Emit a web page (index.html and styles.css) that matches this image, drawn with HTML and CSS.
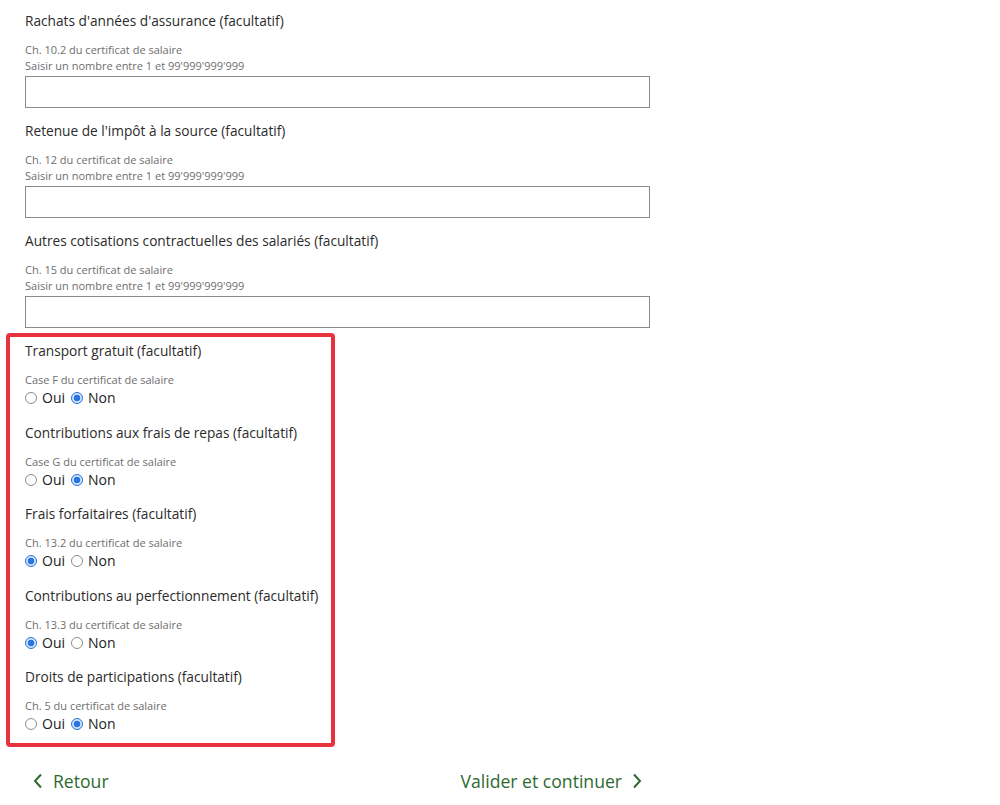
FILE: index.html
```html
<!DOCTYPE html>
<html lang="fr">
<head>
<meta charset="utf-8">
<title>Certificat de salaire</title>
<link rel="stylesheet" href="styles.css">
</head>
<body>
<main class="form">
  <div class="field">
    <div class="label">Rachats d'années d'assurance (facultatif)</div>
    <div class="hint">Ch. 10.2 du certificat de salaire</div>
    <div class="hint">Saisir un nombre entre 1 et 99'999'999'999</div>
    <input class="text-input" type="text">
  </div>
  <div class="field">
    <div class="label">Retenue de l'impôt à la source (facultatif)</div>
    <div class="hint">Ch. 12 du certificat de salaire</div>
    <div class="hint">Saisir un nombre entre 1 et 99'999'999'999</div>
    <input class="text-input" type="text">
  </div>
  <div class="field">
    <div class="label">Autres cotisations contractuelles des salariés (facultatif)</div>
    <div class="hint">Ch. 15 du certificat de salaire</div>
    <div class="hint">Saisir un nombre entre 1 et 99'999'999'999</div>
    <input class="text-input" type="text">
  </div>

  <section class="highlight">
    <div class="radio-field">
      <div class="label">Transport gratuit (facultatif)</div>
      <div class="hint">Case F du certificat de salaire</div>
      <div class="options">
        <label class="opt"><span class="radio"></span>Oui</label>
        <label class="opt"><span class="radio checked"></span>Non</label>
      </div>
    </div>
    <div class="radio-field">
      <div class="label">Contributions aux frais de repas (facultatif)</div>
      <div class="hint">Case G du certificat de salaire</div>
      <div class="options">
        <label class="opt"><span class="radio"></span>Oui</label>
        <label class="opt"><span class="radio checked"></span>Non</label>
      </div>
    </div>
    <div class="radio-field">
      <div class="label">Frais forfaitaires (facultatif)</div>
      <div class="hint">Ch. 13.2 du certificat de salaire</div>
      <div class="options">
        <label class="opt"><span class="radio checked"></span>Oui</label>
        <label class="opt"><span class="radio"></span>Non</label>
      </div>
    </div>
    <div class="radio-field">
      <div class="label">Contributions au perfectionnement (facultatif)</div>
      <div class="hint">Ch. 13.3 du certificat de salaire</div>
      <div class="options">
        <label class="opt"><span class="radio checked"></span>Oui</label>
        <label class="opt"><span class="radio"></span>Non</label>
      </div>
    </div>
    <div class="radio-field last">
      <div class="label">Droits de participations (facultatif)</div>
      <div class="hint">Ch. 5 du certificat de salaire</div>
      <div class="options">
        <label class="opt"><span class="radio"></span>Oui</label>
        <label class="opt"><span class="radio checked"></span>Non</label>
      </div>
    </div>
  </section>

  <nav class="nav">
    <a class="nav-link back" href="#">
      <svg class="chev" width="10" height="16" viewBox="0 0 10 16"><path d="M8 1.5 L2 8 L8 14.5" fill="none" stroke="currentColor" stroke-width="2"/></svg>
      Retour
    </a>
    <a class="nav-link next" href="#">
      Valider et continuer
      <svg class="chev" width="10" height="16" viewBox="0 0 10 16"><path d="M2 1.5 L8 8 L2 14.5" fill="none" stroke="currentColor" stroke-width="2"/></svg>
    </a>
  </nav>
</main>
</body>
</html>
```
FILE: styles.css
```css
* { box-sizing: border-box; }
html, body { margin: 0; padding: 0; background: #fff; }
body {
  font-family: "Open Sans", "Noto Sans", "Liberation Sans", sans-serif;
  color: #333;
}
.form {
  width: 650px;
  padding: 11px 0 0 25px;
}
.field { margin-bottom: 13px; }
.label {
  font-size: 13.7px;
  line-height: 20px;
  color: #2b2b2b;
  margin-bottom: 11px;
  white-space: nowrap;
}
.hint {
  font-size: 11px;
  line-height: 16px;
  color: #6e6e6e;
}
.text-input {
  display: block;
  width: 625px;
  height: 32px;
  margin-top: 2px;
  border: 1px solid #8a8a8a;
  background: #fff;
  font: inherit;
}
.highlight {
  margin: -8px 0 0 -19px;
  width: 329px;
  border: 4px solid #e8333f;
  border-radius: 4px;
  padding: 4px 0 9px 15px;
}
.radio-field { margin-bottom: 14.6px; }
.radio-field.last { margin-bottom: 0; }
.options {
  display: flex;
  gap: 6px;
  font-size: 14px;
  line-height: 20px;
  color: #222;
}
.opt { display: flex; align-items: center; gap: 5px; }
.radio {
  width: 12px;
  height: 12px;
  border-radius: 50%;
  border: 1px solid #8c8c8c;
  background: #fff;
}
.radio.checked {
  border-color: #2a73dc;
  background: radial-gradient(circle, #2a74e0 0 3px, #cfe1fa 3.6px);
}
.nav {
  display: flex;
  justify-content: space-between;
  width: 625px;
  padding: 0 8px;
  margin-top: 23px;
}
.nav-link {
  display: flex;
  align-items: center;
  gap: 10px;
  color: #2e6a30;
  text-decoration: none;
  font-size: 17.6px;
  line-height: 22px;
}
.chev { display: block; }
```
